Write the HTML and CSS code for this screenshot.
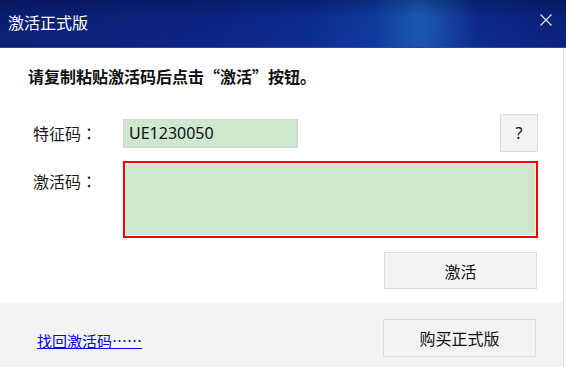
FILE: index.html
```html
<!DOCTYPE html>
<html lang="zh-CN">
<head>
<meta charset="utf-8">
<title>激活正式版</title>
<link rel="stylesheet" href="styles.css">
</head>
<body>
<div class="window">
  <div class="titlebar">
    <span class="title">激活正式版</span>
    <span class="close">
      <svg width="12" height="12" viewBox="0 0 12 12"><path d="M0.5 0.5L11.5 11.5M11.5 0.5L0.5 11.5" stroke="#dfe3ee" stroke-width="1.3" fill="none"/></svg>
    </span>
  </div>
  <div class="content">
    <div class="heading">请复制粘贴激活码后点击“激活”按钮。</div>
    <div class="row row-id">
      <div class="label">特征码<span class="colon" lang="zh-TW">：</span></div>
      <div class="field">UE1230050</div>
      <div class="spacer"></div>
      <div class="btn btn-q">?</div>
    </div>
    <div class="row row-code">
      <div class="label label-top">激活码<span class="colon" lang="zh-TW">：</span></div>
      <div class="code-box"></div>
    </div>
    <div class="row row-act">
      <div class="btn btn-wide">激活</div>
    </div>
  </div>
  <div class="footer">
    <a class="link" href="#">找回激活码……</a>
    <div class="btn btn-wide">购买正式版</div>
  </div>
</div>
</body>
</html>
```
FILE: styles.css
```css
html, body {
  margin: 0;
  padding: 0;
  background: #ffffff;
}
.window {
  width: 566px;
  height: 367px;
  display: flex;
  flex-direction: column;
  font-family: "Noto Sans CJK SC", "Noto Sans", sans-serif;
  color: #1a1a1a;
  overflow: hidden;
}
.titlebar {
  height: 47px;
  border-bottom: 1px solid #30449a;
  display: flex;
  align-items: center;
  justify-content: space-between;
  padding: 0 14px 0 8px;
  background:
    linear-gradient(180deg, rgba(0,0,30,0.25) 0%, rgba(0,0,0,0) 40%, rgba(30,60,160,0.15) 100%),
    linear-gradient(90deg, #0a1d70 0%, #0b2380 35%, #0c2b8e 55%, #0f3a9e 66%, #1a5cb2 74%, #164aa4 78%, #0c2a8a 84%, #0a1f78 100%);
}
.title {
  color: #ffffff;
  font-size: 16px;
  line-height: 20px;
  margin-top: -4px;
}
.close {
  display: flex;
  width: 12px;
  height: 12px;
  margin-top: -8px;
}
.content {
  flex: 1;
  width: 564px;
  border-right: 1px solid #dddddd;
  display: flex;
  flex-direction: column;
  padding-top: 16px;
  box-sizing: border-box;
}
.heading {
  font-size: 16px;
  font-weight: bold;
  line-height: 24px;
  padding-left: 28px;
  color: #111111;
}
.row {
  display: flex;
  padding-left: 33px;
  width: 505px;
}
.row-id {
  margin-top: 26px;
  align-items: center;
  height: 38px;
}
.label {
  width: 90px;
  font-size: 16px;
  line-height: 24px;
  flex: none;
}
.colon {
  font-family: "Noto Sans CJK TC", "Noto Sans CJK SC", sans-serif;
}
.label-top {
  padding-top: 8px;
}
.field {
  width: 168px;
  height: 27px;
  border: 1px solid #d6d6d6;
  background: #cde8cf;
  font-size: 16px;
  line-height: 27px;
  padding-left: 5px;
  box-sizing: content-box;
  font-family: "Noto Sans", "Noto Sans CJK SC", sans-serif;
  color: #111111;
}
.spacer {
  flex: 1;
}
.btn {
  background: #f3f3f3;
  border: 1px solid #dddddd;
  box-sizing: border-box;
  display: flex;
  align-items: center;
  justify-content: center;
  font-size: 16px;
  color: #111111;
}
.btn-q {
  width: 38px;
  height: 38px;
  font-family: "Noto Sans", sans-serif;
  font-size: 16px;
}
.row-code {
  margin-top: 9px;
}
.code-box {
  width: 415px;
  height: 77px;
  border: 2px solid #ff0000;
  box-sizing: border-box;
  background: #cde8cf;
  box-shadow: inset 0 0 0 1px #e8f4e9;
}
.row-act {
  margin-top: 14px;
  justify-content: flex-end;
  width: 504px;
}
.btn-wide {
  width: 153px;
  height: 37px;
}
.footer {
  height: 64px;
  background: #f3f3f3;
  width: 564px;
  border-right: 1px solid #dddddd;
  display: flex;
  align-items: flex-start;
  justify-content: space-between;
  padding: 0 27px 0 37px;
  box-sizing: border-box;
}
.footer .btn-wide {
  margin-top: 16px;
  height: 38px;
}
.link {
  color: #0000ff;
  font-size: 15px;
  line-height: 20px;
  margin-top: 28px;
  text-decoration: underline;
}
```
